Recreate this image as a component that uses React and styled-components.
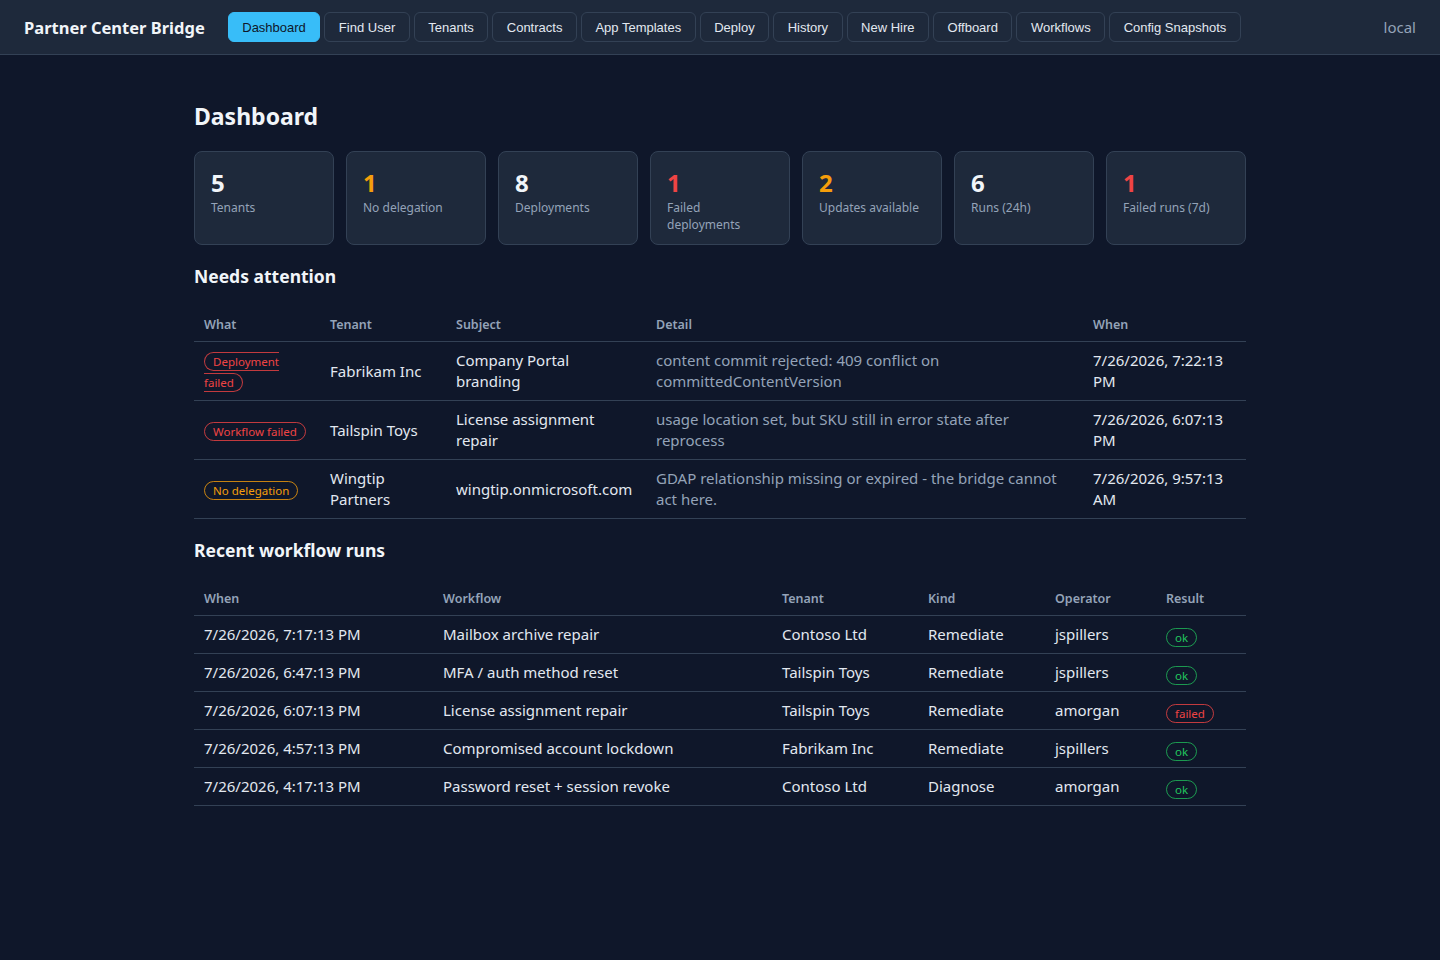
import React from 'react'
import styled, { createGlobalStyle } from 'styled-components'

const GlobalStyle = createGlobalStyle`
    body {
        margin: 0;
        background: #0f172a;
        color: #e2e8f0;
        font-family: "Noto Sans", "Open Sans", sans-serif;
    }
`

const Header = styled.header`
    display: flex;
    align-items: center;
    height: 54px;
    padding: 0 24px;
    background: #1e293b;
    border-bottom: 1px solid #334155;
    .brand {
        font-weight: 700;
        font-size: 16.5px;
        color: #f1f5f9;
        margin-right: 23px;
        white-space: nowrap;
    }
    .env {
        margin-left: auto;
        color: #94a3b8;
        font-size: 15px;
    }
`
const Nav = styled.nav`
    display: flex;
    gap: 4px;
`
const NavBtn = styled.button`
    height: 30px;
    padding: 0 13.5px;
    border-radius: 6px;
    border: 1px solid ${p => (p.$active ? '#38bdf8' : '#334155')};
    background: ${p => (p.$active ? '#38bdf8' : 'transparent')};
    color: ${p => (p.$active ? '#0f172a' : '#e2e8f0')};
    font-family: "Liberation Sans", Arial, sans-serif;
    font-size: 13px;
    cursor: pointer;
    white-space: nowrap;
`
const Main = styled.main`
    max-width: 1100px;
    margin: 0 auto;
    padding: 46px 24px 40px;
    box-sizing: border-box;
    h2 {
        font-size: 23px;
        line-height: 31px;
        font-weight: 700;
        margin: 0 0 19px;
        color: #f1f5f9;
    }
    h3 {
        font-size: 17.5px;
        line-height: 24px;
        font-weight: 700;
        margin: 0 0 21px;
        color: #f1f5f9;
    }
`
const Stats = styled.div`
    display: grid;
    grid-template-columns: repeat(auto-fill, minmax(140px, 1fr));
    gap: 12px;
    margin-bottom: 19px;
`
const Stat = styled.div`
    background: #1e293b;
    border: 1px solid #334155;
    border-radius: 8px;
    padding: 18px 16px 10px;
    min-height: 94px;
    box-sizing: border-box;
    .num {
        font-size: 24px;
        line-height: 26px;
        font-weight: 700;
        color: ${p => p.$tone === 'warn' ? '#f59e0b' : p.$tone === 'bad' ? '#ef4444' : '#f1f5f9'};
    }
    .label {
        margin-top: 3px;
        font-size: 12px;
        line-height: 17px;
        color: #94a3b8;
    }
`
const Table = styled.table`
    width: 100%;
    border-collapse: collapse;
    table-layout: fixed;
    margin-bottom: 19px;
    th {
        text-align: left;
        font-size: 12.5px;
        line-height: 16px;
        font-weight: 600;
        color: #94a3b8;
        padding: 8px 10px;
        border-bottom: 1px solid #334155;
    }
    td {
        font-size: 15px;
        line-height: 21px;
        padding: 8px 10px;
        border-bottom: 1px solid #334155;
        vertical-align: middle;
    }
    td.muted {
        color: #94a3b8;
    }
`
const Col = styled.col`
    width: ${p => p.$w}px;
`
const Badge = styled.span`
    display: inline;
    font-size: 11.5px;
    line-height: 14px;
    padding: 1px 8px;
    border-radius: 999px;
    border: 1px solid ${p => p.$tone === 'warn' ? 'rgba(245,158,11,0.8)' : p.$tone === 'ok' ? 'rgba(34,197,94,0.75)' : 'rgba(239,68,68,0.8)'};
    color: ${p => p.$tone === 'warn' ? '#f59e0b' : p.$tone === 'ok' ? '#22c55e' : '#ef4444'};
    vertical-align: ${p => (p.$low ? '-2px' : 'baseline')};
`

const navItems = ['Dashboard', 'Find User', 'Tenants', 'Contracts', 'App Templates', 'Deploy', 'History', 'New Hire', 'Offboard', 'Workflows', 'Config Snapshots']

const stats = [
    { n: 5, label: 'Tenants' },
    { n: 1, label: 'No delegation', tone: 'warn' },
    { n: 8, label: 'Deployments' },
    { n: 1, label: 'Failed deployments', tone: 'bad' },
    { n: 2, label: 'Updates available', tone: 'warn' },
    { n: 6, label: 'Runs (24h)' },
    { n: 1, label: 'Failed runs (7d)', tone: 'bad' },
]

const attention = [
    { what: 'Deployment failed', tone: 'bad', tenant: 'Fabrikam Inc', subject: 'Company Portal branding', detail: 'content commit rejected: 409 conflict on committedContentVersion', when: '7/26/2026, 7:22:13 PM' },
    { what: 'Workflow failed', tone: 'bad', tenant: 'Tailspin Toys', subject: 'License assignment repair', detail: 'usage location set, but SKU still in error state after reprocess', when: '7/26/2026, 6:07:13 PM' },
    { what: 'No delegation', tone: 'warn', tenant: 'Wingtip Partners', subject: 'wingtip.onmicrosoft.com', detail: 'GDAP relationship missing or expired - the bridge cannot act here.', when: '7/26/2026, 9:57:13 AM' },
]

const runs = [
    { when: '7/26/2026, 7:17:13 PM', wf: 'Mailbox archive repair', tenant: 'Contoso Ltd', kind: 'Remediate', op: 'jspillers', ok: true },
    { when: '7/26/2026, 6:47:13 PM', wf: 'MFA / auth method reset', tenant: 'Tailspin Toys', kind: 'Remediate', op: 'jspillers', ok: true },
    { when: '7/26/2026, 6:07:13 PM', wf: 'License assignment repair', tenant: 'Tailspin Toys', kind: 'Remediate', op: 'amorgan', ok: false },
    { when: '7/26/2026, 4:57:13 PM', wf: 'Compromised account lockdown', tenant: 'Fabrikam Inc', kind: 'Remediate', op: 'jspillers', ok: true },
    { when: '7/26/2026, 4:17:13 PM', wf: 'Password reset + session revoke', tenant: 'Contoso Ltd', kind: 'Diagnose', op: 'amorgan', ok: true },
]

const App = () => {
    return (
        <>
            <GlobalStyle />
            <Header>
                <div className="brand">Partner Center Bridge</div>
                <Nav>
                    {navItems.map((item, i) => (
                        <NavBtn key={item} $active={i === 0}>{item}</NavBtn>
                    ))}
                </Nav>
                <div className="env">local</div>
            </Header>
            <Main>
                <h2>Dashboard</h2>
                <Stats>
                    {stats.map((s, i) => (
                        <Stat key={i} $tone={s.tone}>
                            <div className="num">{s.n}</div>
                            <div className="label">{s.label}</div>
                        </Stat>
                    ))}
                </Stats>

                <h3>Needs attention</h3>
                <Table>
                    <colgroup>
                        {[126, 126, 200, 437, 163].map((w, i) => <Col key={i} $w={w} />)}
                    </colgroup>
                    <thead>
                        <tr><th>What</th><th>Tenant</th><th>Subject</th><th>Detail</th><th>When</th></tr>
                    </thead>
                    <tbody>
                        {attention.map((a, i) => (
                            <tr key={i}>
                                <td><Badge $tone={a.tone}>{a.what}</Badge></td>
                                <td>{a.tenant}</td>
                                <td>{a.subject}</td>
                                <td className="muted">{a.detail}</td>
                                <td>{a.when}</td>
                            </tr>
                        ))}
                    </tbody>
                </Table>

                <h3>Recent workflow runs</h3>
                <Table>
                    <colgroup>
                        {[239, 339, 146, 127, 111, 90].map((w, i) => <Col key={i} $w={w} />)}
                    </colgroup>
                    <thead>
                        <tr><th>When</th><th>Workflow</th><th>Tenant</th><th>Kind</th><th>Operator</th><th>Result</th></tr>
                    </thead>
                    <tbody>
                        {runs.map((r, i) => (
                            <tr key={i}>
                                <td>{r.when}</td>
                                <td>{r.wf}</td>
                                <td>{r.tenant}</td>
                                <td>{r.kind}</td>
                                <td>{r.op}</td>
                                <td><Badge $tone={r.ok ? 'ok' : 'bad'} $low>{r.ok ? 'ok' : 'failed'}</Badge></td>
                            </tr>
                        ))}
                    </tbody>
                </Table>
            </Main>
        </>
    )
}

export default App
